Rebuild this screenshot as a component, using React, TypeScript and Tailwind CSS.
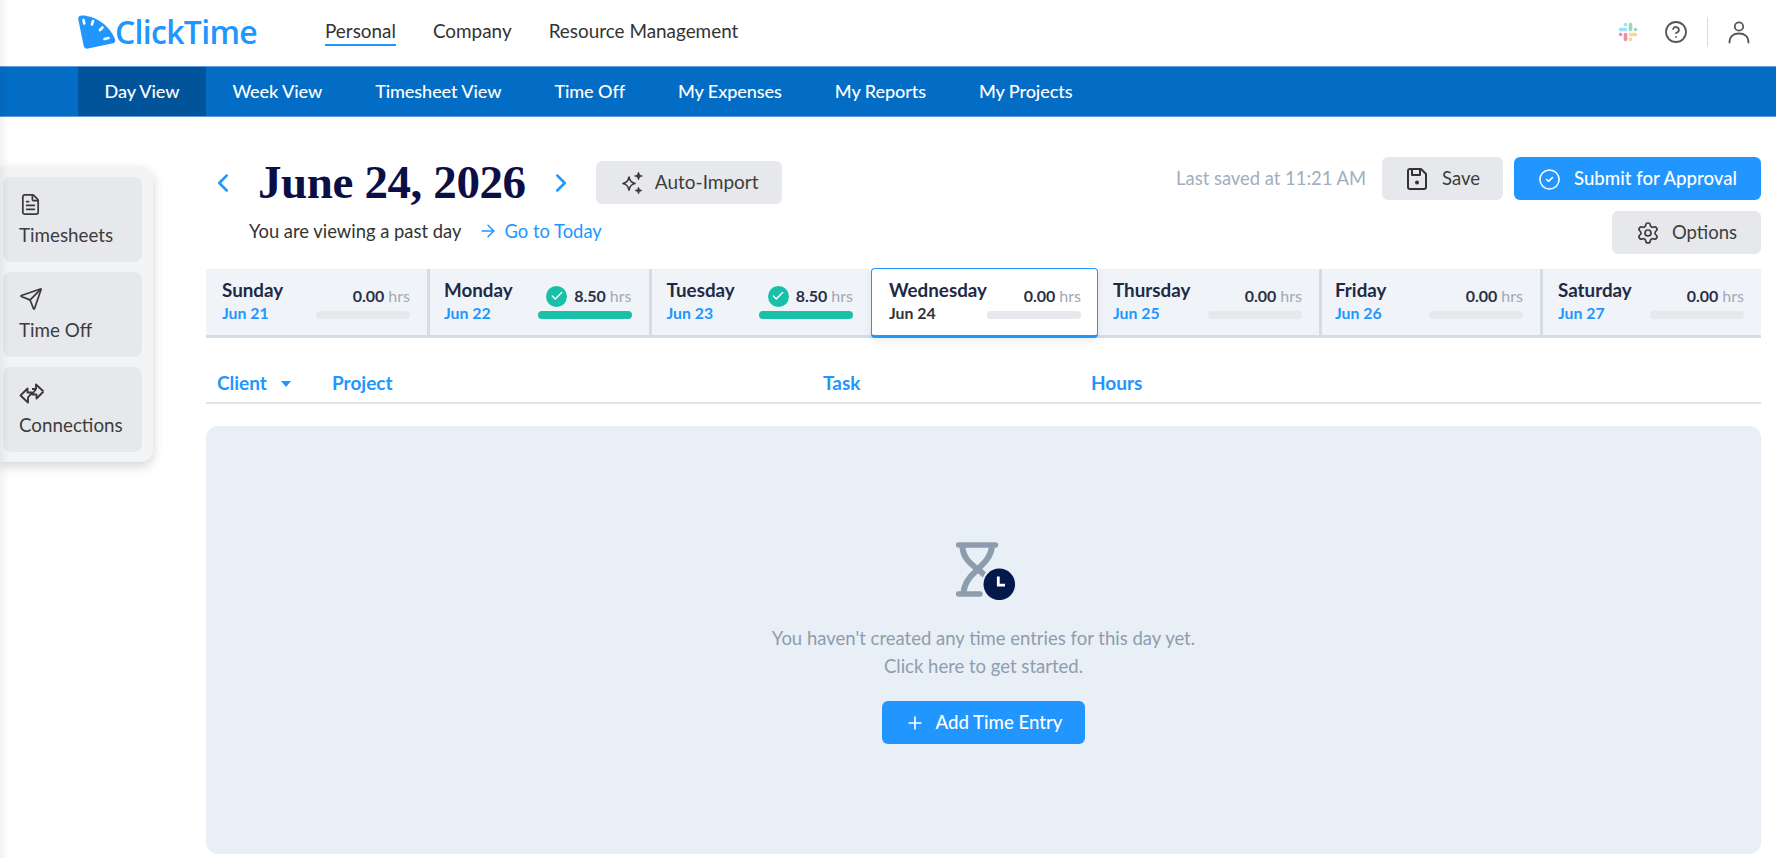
import { ChevronLeft, ChevronRight, CircleCheck, CircleHelp, FileText, Plus, Send, Settings, ArrowRight, Check } from "lucide-react";

const tabs = ["Day View", "Week View", "Timesheet View", "Time Off", "My Expenses", "My Reports", "My Projects"];

const days = [
  { name: "Sunday", date: "Jun 21", hrs: "0.00", cls: "pl-[16px]" },
  { name: "Monday", date: "Jun 22", hrs: "8.50", done: true, cls: "border-l-[3px] border-[#d3dde5] pl-[14px]" },
  { name: "Tuesday", date: "Jun 23", hrs: "8.50", done: true, cls: "border-l-[3px] border-[#d3dde5] pl-[15px]" },
  { name: "Wednesday", date: "Jun 24", hrs: "0.00", active: true },
  { name: "Thursday", date: "Jun 25", hrs: "0.00", cls: "pl-[15px]" },
  { name: "Friday", date: "Jun 26", hrs: "0.00", cls: "border-l-[3px] border-[#d3dde5] pl-[13px]" },
  { name: "Saturday", date: "Jun 27", hrs: "0.00", cls: "border-l-[3px] border-[#d3dde5] pl-[15px]" },
];

function Logo() {
  return (
    <svg width="38" height="34" viewBox="0 0 38 34">
      <path
        d="M4 0.5 C16 0.5 31 9 37 24 C37.6 26 37 27.5 35 28.3 L10 33.6 C7.5 34 6 32.8 5.6 30.5 L0.3 4.5 C-0.2 2 1.5 0.4 4 0.5 Z"
        fill="#2196ff"
      />
      <g stroke="#fff" strokeWidth="2.6" strokeLinecap="round">
        <path d="M5.5 5 L6.2 8.5" />
        <path d="M15 6 L14 9.5" />
        <path d="M24.5 12.5 L22 15" />
        <path d="M30.5 23 L26.5 24" />
      </g>
    </svg>
  );
}

function SlackIcon() {
  return (
    <svg width="20" height="20" viewBox="0 0 20 20" fill="none" strokeLinecap="round" strokeWidth="3.6" opacity="0.5">
      <path d="M2.5 7.5 H7.5 M7.5 2.5 V2.6" stroke="#36c5f0" />
      <path d="M12.5 2.5 V7.5 M17.5 7.5 H17.4" stroke="#2eb67d" />
      <path d="M12.5 12.5 H17.5 M12.5 17.5 V17.4" stroke="#ecb22e" />
      <path d="M7.5 12.5 V17.5 M2.5 12.5 H2.6" stroke="#e01e5a" />
    </svg>
  );
}

function UserIcon() {
  return (
    <svg width="22" height="24" viewBox="0 0 22 24" fill="none" stroke="#555" strokeWidth="1.8">
      <circle cx="11" cy="6.5" r="4.2" />
      <path d="M1.5 22.5 C1.5 16.5 5.5 13.5 11 13.5 C16.5 13.5 20.5 16.5 20.5 22.5" strokeLinecap="round" />
    </svg>
  );
}

function SparkleIcon() {
  return (
    <svg width="26" height="26" viewBox="0 0 26 26" fill="none" stroke="#3a3a3a" strokeWidth="1.7" strokeLinejoin="round">
      <path d="M10 7 C10.8 11 12 12.5 16 13.5 C12 14.5 10.8 16 10 20 C9.2 16 8 14.5 4 13.5 C8 12.5 9.2 11 10 7 Z" />
      <path d="M19.5 2 L20.7 5 L23.5 6 L20.7 7 L19.5 10 L18.3 7 L15.5 6 L18.3 5 Z" fill="#3a3a3a" strokeWidth="0.6" />
      <path d="M19.5 17 L20.5 19.5 L23 20.5 L20.5 21.5 L19.5 24 L18.5 21.5 L16 20.5 L18.5 19.5 Z" fill="#3a3a3a" strokeWidth="0.6" />
    </svg>
  );
}

function SaveIcon() {
  return (
    <svg width="20" height="24" viewBox="0 0 20 24" fill="none" stroke="#333" strokeWidth="2" strokeLinejoin="round">
      <path d="M4 2 H14 L19 7 V20 C19 21.2 18.2 22 17 22 H3 C1.8 22 1 21.2 1 20 V4 C1 2.8 1.8 2 3 2 Z" />
      <path d="M5 2 V8 H13 V2" />
      <circle cx="10" cy="15.5" r="2" fill="#333" stroke="none" />
    </svg>
  );
}

function ConnectionsIcon() {
  return (
    <svg width="26" height="24" viewBox="0 0 26 24" fill="none" stroke="#3a3a3a" strokeWidth="1.9" strokeLinejoin="round">
      <path d="M1.5 13.5 L8.5 6.5 V10.5 H13 L9 15.5 V20.5 Z" />
      <path d="M24.5 9.5 L17 2.5 V7 H13 M24.5 9.5 L17.5 16.5 V12.5 H13 L17 7" />
    </svg>
  );
}

function HourglassIcon() {
  return (
    <svg width="60" height="58" viewBox="0 0 60 58" fill="none">
      <g stroke="#8e9dae">
        <path d="M2.5 3 H39.5" strokeWidth="5.4" strokeLinecap="round" />
        <path d="M2.5 52 H24" strokeWidth="5.4" strokeLinecap="round" />
        <path d="M6.5 5 C7 15 13 21 24 29 L34 38" strokeWidth="6" />
        <path d="M36 5 C34.5 16 27 22 20 29 C12 36 8.5 42 7.5 50" strokeWidth="6" />
      </g>
      <circle cx="43.3" cy="42.3" r="16.8" fill="#03194a" stroke="#e8eff7" strokeWidth="2" />
      <path d="M42.3 34.5 V43.2 H49" stroke="#fff" strokeWidth="2.8" fill="none" />
    </svg>
  );
}

function SideItem({ icon, label }: { icon: React.ReactNode; label: string }) {
  return (
    <div className="h-[85px] rounded-lg bg-[#e6e8ec] pl-[16px] pt-[14px] text-[18.8px] leading-[24px] text-[#3d3d3d]">
      <div className="flex h-[26px] items-center">{icon}</div>
      <div className="mt-[6px]">{label}</div>
    </div>
  );
}

export default function App() {
  return (
    <div className="relative h-[858px] w-full overflow-hidden bg-white font-['Lato',sans-serif]">
      <div className="pointer-events-none absolute inset-y-0 left-0 z-20 w-[10px] bg-gradient-to-r from-black/5 to-transparent" />

      {/* top nav */}
      <div className="flex h-[66px] items-center pb-[3px] pl-[78px] pr-[26px]">
        <Logo />
        <span className="-ml-[1px] w-[146px] font-['Open_Sans',sans-serif] text-[32px] font-semibold leading-none tracking-[-0.7px] text-[#2196ff]">
          ClickTime
        </span>
        <nav className="ml-[64px] flex gap-[37px] text-[18.9px] text-[#333]">
          <span className="relative">
            Personal
            <span className="absolute inset-x-0 top-[27px] h-[2px] bg-[#2196ff]" />
          </span>
          <span>Company</span>
          <span>Resource Management</span>
        </nav>
        <div className="ml-auto flex items-center">
          <SlackIcon />
          <CircleHelp size={24} strokeWidth={1.8} color="#555" className="ml-[26px]" />
          <div className="ml-[19px] h-[30px] w-px bg-[#d5dde6]" />
          <div className="ml-[20px]">
            <UserIcon />
          </div>
        </div>
      </div>

      {/* blue tabs */}
      <div className="flex h-[51px] border-y border-[#5c9fd9] bg-[#036cc4] pl-[78px] text-[18.1px] font-medium tracking-[-0.1px] text-white">
        {tabs.map((t, i) => (
          <div key={t} className={`flex items-center px-[26.5px] pt-[1px] ${i === 0 ? "bg-[#02549a]" : ""}`}>
            {t}
          </div>
        ))}
      </div>

      <div className="flex items-start">
        {/* side panel */}
        <aside className="mt-[50px] flex w-[153px] shrink-0 flex-col gap-[10px] rounded-r-xl bg-[#f3f4f6] py-[10px] pl-[3px] pr-[11px] shadow-[0_4px_12px_rgba(0,0,0,0.18)]">
          <SideItem icon={<FileText size={23} strokeWidth={1.8} color="#3a3a3a" />} label="Timesheets" />
          <SideItem icon={<Send size={24} strokeWidth={1.7} color="#3a3a3a" />} label="Time Off" />
          <SideItem icon={<ConnectionsIcon />} label="Connections" />
        </aside>

        <main className="ml-[53px] w-[1555px] shrink-0">
          {/* date row */}
          <div className="flex h-[152px] justify-between pt-[40px]">
            <div className="pt-[4px]">
              <div className="flex h-[43px] items-center">
                <ChevronLeft size={30} strokeWidth={2} color="#2196ff" className="ml-[2px]" />
                <h1 className="ml-[20px] font-['Liberation_Serif',serif] text-[47px] font-bold leading-none tracking-[-0.4px] text-[#0b0f44]">
                  June 24, 2026
                </h1>
                <ChevronRight size={30} strokeWidth={2} color="#2196ff" className="ml-[20px]" />
                <button className="ml-[20px] flex h-[43px] w-[186px] items-center justify-center gap-[10px] rounded-md bg-[#e6e8ec] text-[19px] text-[#3d3d3d]">
                  <SparkleIcon />
                  Auto-Import
                </button>
              </div>
              <div className="ml-[43px] mt-[15px] flex items-center text-[18.4px] leading-[24px] text-[#333]">
                You are viewing a past day
                <ArrowRight size={20} strokeWidth={1.8} color="#2196ff" className="ml-[17px]" />
                <span className="ml-[6px] text-[#2196ff]">Go to Today</span>
              </div>
            </div>
            <div className="flex flex-col items-end gap-[11px]">
              <div className="flex items-center">
                <span className="pt-[1px] text-[18.4px] text-[#a0aebd]">Last saved at 11:21 AM</span>
                <button className="ml-[16px] flex h-[43px] w-[121px] items-center justify-center gap-[15px] rounded-md bg-[#e6e8ec] pl-[2px] pt-[1px] text-[18.5px] text-[#3d3d3d]">
                  <SaveIcon />
                  Save
                </button>
                <button className="ml-[11px] flex h-[43px] w-[247px] items-center justify-center gap-[13px] rounded-md bg-[#2196ff] pt-[1px] text-[18.6px] font-medium text-white">
                  <CircleCheck size={23} strokeWidth={1.6} />
                  Submit for Approval
                </button>
              </div>
              <button className="flex h-[43px] w-[149px] items-center justify-center gap-[12px] rounded-md bg-[#e6e8ec] text-[18.5px] text-[#3d3d3d]">
                <Settings size={24} strokeWidth={1.7} />
                Options
              </button>
            </div>
          </div>

          {/* week strip */}
          <div className="grid h-[69px] grid-cols-[221px_221.5px_221.5px_228px_221px_221px_221px] border-b-[3px] border-[#d3dde5] bg-[#f0f4f9]">
            {days.map((d) => (
              <div
                key={d.name}
                className={`relative flex justify-between ${
                  d.active
                    ? "z-10 -mb-[3px] -mt-[1px] ml-[1px] rounded-[4px] border border-b-[3px] border-[#2196ff] bg-white pl-[17px] pr-[16px] shadow-[0_3px_8px_rgba(0,0,0,0.08)]"
                    : `pr-[17px] ${d.cls}`
                }`}
              >
                <div className="pt-[9px]">
                  <div className="text-[18.8px] font-bold leading-[24px] text-[#1f2a44]">{d.name}</div>
                  <div className={`text-[15.8px] font-bold leading-[22px] ${d.active ? "text-[#333]" : "text-[#2196ff]"}`}>
                    {d.date}
                  </div>
                </div>
                <div className="flex w-[94px] flex-col items-end pt-[15px]">
                  <div className="flex h-[24px] items-center text-[16px] leading-none">
                    {d.done && (
                      <span className="mr-[7px] flex h-[21px] w-[21px] items-center justify-center rounded-full bg-[#1abfa8]">
                        <Check size={14} strokeWidth={2.4} color="#fff" />
                      </span>
                    )}
                    <span className="font-bold text-[#2a2f45]">{d.hrs}</span>
                    <span className="ml-[4px] text-[#a0a9b5]">hrs</span>
                  </div>
                  <div className={`mt-[3px] h-[8px] w-full rounded-full ${d.done ? "bg-[#1abfa8]" : "bg-[#e6e8ec]"}`} />
                </div>
              </div>
            ))}
          </div>

          {/* table header */}
          <div className="flex h-[66px] items-end border-b-2 border-[#dfe5ea] pb-[5px] text-[19px] font-bold text-[#2196ff]">
            <div className="ml-[11px] flex w-[115px] items-center">
              Client
              <span className="ml-[14px] mt-[3px] h-0 w-0 border-x-[5px] border-t-[6px] border-x-transparent border-t-[#2196ff]" />
            </div>
            <div className="w-[491px]">Project</div>
            <div className="w-[268px]">Task</div>
            <div>Hours</div>
          </div>

          {/* empty state */}
          <div className="mt-[22px] flex h-[428px] flex-col items-center rounded-xl bg-[#e8eff7] pt-[116px]">
            <div className="ml-[5px]">
              <HourglassIcon />
            </div>
            <p className="mt-[24px] text-center text-[18.5px] leading-[28px] text-[#8e9dae]">
              You haven't created any time entries for this day yet.
              <br />
              Click here to get started.
            </p>
            <button className="mt-[21px] flex h-[43px] w-[203px] items-center justify-center gap-[11px] rounded-md bg-[#2196ff] text-[18.6px] font-medium text-white">
              <Plus size={20} strokeWidth={2} />
              Add Time Entry
            </button>
          </div>
        </main>
      </div>
    </div>
  );
}
